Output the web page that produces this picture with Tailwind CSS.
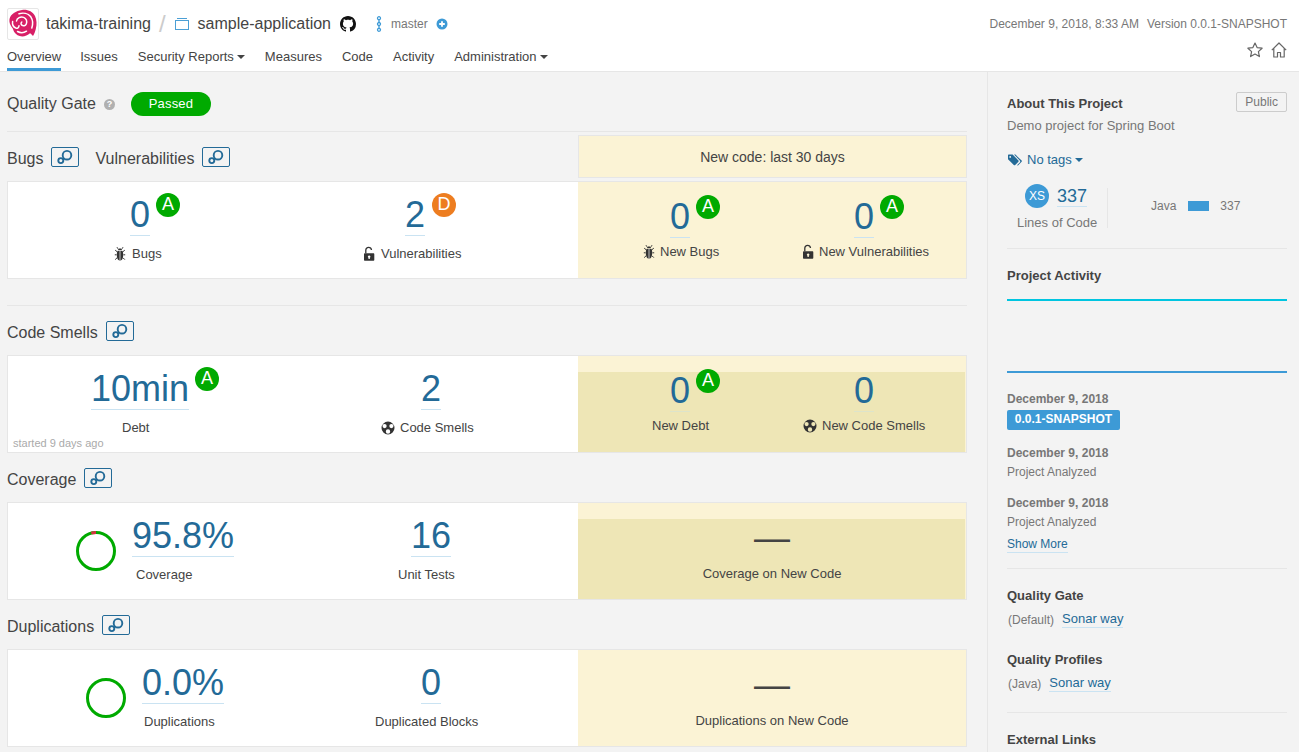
<!DOCTYPE html>
<html lang="en">
<head>
  <meta charset="UTF-8">
  <title>sample-application</title>
  <script src="https://cdn.jsdelivr.net/npm/@tailwindcss/browser@4"></script>
</head>
<body class="h-screen overflow-hidden bg-[#f3f3f3] text-[13px] leading-[18px] text-[#444] font-['Liberation_Sans',sans-serif]">
  <!-- shared icons -->
  <svg class="hidden">
    <symbol id="i-link" viewBox="0 0 28 20">
      <g fill="none" stroke="currentColor" stroke-width="1.900">
        <circle cx="16" cy="8.200" r="4.300"/>
        <circle cx="9.800" cy="13.600" r="2.500"/>
        <path d="M12.800 11.200l-1.300 1.100"/>
      </g>
    </symbol>
    <symbol id="i-bug" viewBox="0 0 14 16">
      <path fill="currentColor" d="M4.800 4.200C5 3 5.900 2.400 7 2.400s2 .6 2.200 1.800zM4.400 5h5.200c.5 1 .6 2.400.6 4 0 3-1.100 5.500-2.700 5.600H6.500C4.900 14.500 3.800 12 3.800 9c0-1.600.1-3 .6-4z"/>
      <path fill="none" stroke="currentColor" stroke-width="1" d="M5 2.800L4 1.200M9 2.800l1-1.600M4 5.600L2.200 4.200M10 5.600l1.800-1.400M3.600 8.800H1.800M10.400 8.800h1.800M4 11.800l-1.800 1.800M10 11.800l1.800 1.800"/>
      <path fill="none" stroke="#fff" stroke-width=".7" d="M7 5v9.500"/>
    </symbol>
    <symbol id="i-lock" viewBox="0 0 14 16">
      <path fill="currentColor" fill-rule="evenodd" d="M3 7.200h8.300c.6 0 1 .4 1 1v5.600c0 .6-.4 1-1 1H3c-.6 0-1-.4-1-1V8.200c0-.6.4-1 1-1zm4.200 2.200a1.300 1.300 0 0 0-.7 2.400v1.300h1.300v-1.300a1.300 1.300 0 0 0-.6-2.400z"/>
      <path fill="none" stroke="currentColor" stroke-width="1.300" d="M3.800 7.200V4.200C3.800 2.700 4.900 1.400 6.600 1.400S9.300 2.600 9.500 4"/>
    </symbol>
    <symbol id="i-smell" viewBox="0 0 14 14">
      <path fill="currentColor" fill-rule="evenodd" d="M7 .5a6.500 6.500 0 1 0 0 13a6.500 6.500 0 0 0 0-13zM7 8.300a2.200 2.200 0 1 1 0 4.400a2.200 2.200 0 0 1 0-4.400zM3.600 3a2.100 2.100 0 1 1 0 4.200a2.100 2.100 0 0 1 0-4.200zM10.400 3a2.100 2.100 0 1 1 0 4.200a2.100 2.100 0 0 1 0-4.200z"/>
    </symbol>
  </svg>

  <!-- header -->
  <header class="h-[72px] bg-white border-b border-[#e6e6e6]">
    <div class="h-[48px] flex items-center pl-[7px] pr-[12px]">
      <div class="w-[32px] h-[32px] border border-[#e6e6e6] rounded-[2px] flex items-center justify-center">
        <svg class="w-[30px] h-[30px]" viewBox="0 0 30 30">
          <path fill="#d81f66" d="M14 1c5.500-.8 10.500 1.500 13 6 1.800 3.500 2 8.500.8 13-.5 2.500-1.600 5-2.800 7-1-1-1.800-2.200-3-2.800-2 2-5 3.200-7.800 3.200-3.400 0-6.200-1.800-8-4.400-1-1.600-.8-3.500-2.600-5C2 15.500 1 13 1.500 10 2.500 5 8 1.800 14 1z"/>
          <g fill="none" stroke="#fff" stroke-width="1.500" stroke-linecap="round">
            <path d="M11 4.800c4-1.300 9-.5 11.800 3 2 3 2.200 7.500 1 11.200"/>
            <path d="M8.500 12c.5-3 4-4.600 7.200-3.600 2.600 1 3.700 4 2.600 6.600-.8 1.900-3 2.400-4.500 1.200-1-.8-1-2.400 0-3.200"/>
            <path d="M4.600 12.500c-.5 3 1 5.600 3.200 6.500 1.600.6 3.200-.5 3.200-2.200"/>
            <path d="M9.500 22.500c2.700 1.500 6.300 1.500 9-.3"/>
          </g>
        </svg>
      </div>
      <span class="ml-[7px] text-[16px]">takima-training</span>
      <span class="ml-[8px] text-[24px] font-light text-[#ccc]">/</span>
      <svg class="ml-[9px] w-[14px] h-[14px] -mt-[1px]" viewBox="0 0 14 14" fill="none" stroke="#4b9fd5" stroke-width="1">
        <rect x=".5" y="3.500" width="13" height="9"/>
        <path d="M2 1.500h10"/>
      </svg>
      <span class="ml-[9px] text-[16px]">sample-application</span>
      <svg class="ml-[9px] w-[16px] h-[16px]" viewBox="0 0 16 16">
        <path fill="#111" d="M8 0C3.580 0 0 3.580 0 8c0 3.540 2.290 6.530 5.470 7.590.4.070.55-.17.55-.38 0-.19-.01-.82-.01-1.490-2.010.37-2.530-.49-2.690-.94-.09-.23-.48-.94-.82-1.130-.28-.15-.68-.52-.01-.53.63-.01 1.080.58 1.230.82.72 1.210 1.870.87 2.330.66.07-.52.28-.87.51-1.070-1.780-.2-3.640-.89-3.640-3.950 0-.87.31-1.590.82-2.150-.08-.2-.36-1.020.08-2.120 0 0 .67-.21 2.200.82.64-.18 1.320-.27 2-.27.68 0 1.360.09 2 .27 1.530-1.040 2.200-.82 2.200-.82.44 1.100.16 1.920.08 2.120.51.56.82 1.270.82 2.150 0 3.070-1.870 3.750-3.650 3.950.29.25.54.73.54 1.480 0 1.070-.01 1.930-.01 2.200 0 .21.15.46.55.38A8.013 8.013 0 0 0 16 8c0-4.420-3.580-8-8-8z"/>
      </svg>
      <svg class="ml-[20px] w-[6px] h-[16px]" viewBox="0 0 6 16" fill="none" stroke="#3d9ad6" stroke-width="1.300">
        <circle cx="3" cy="2.200" r="1.500"/><circle cx="3" cy="8" r="1.500"/><circle cx="3" cy="13.800" r="1.500"/>
        <path d="M3 3.700v2.800M3 9.500v2.800"/>
      </svg>
      <span class="ml-[9px] text-[12px] text-[#777]">master</span>
      <svg class="ml-[8px] w-[12px] h-[12px]" viewBox="0 0 12 12">
        <circle cx="6" cy="6" r="5.500" fill="#3d9ad6"/>
        <path d="M3.200 6h5.600M6 3.200v5.600" stroke="#fff" stroke-width="1.800"/>
      </svg>
      <span class="ml-auto text-[12px] text-[#777]">December 9, 2018, 8:33 AM</span>
      <span class="ml-[8px] text-[12px] text-[#777]">Version 0.0.1-SNAPSHOT</span>
    </div>
    <div class="flex pl-[7px] pr-[12px]">
      <nav class="flex items-start gap-[20px]">
        <a class="-mr-px pb-[2px] border-b-[3px] border-[#3d9ad6]">Overview</a>
        <a>Issues</a>
        <a class="flex items-center gap-[3px]">Security Reports
          <svg class="w-[8px] h-[4px]" viewBox="0 0 8 4"><path fill="#444" d="M0 0h8L4 4z"/></svg>
        </a>
        <a>Measures</a>
        <a>Code</a>
        <a>Activity</a>
        <a class="flex items-center gap-[3px]">Administration
          <svg class="w-[8px] h-[4px]" viewBox="0 0 8 4"><path fill="#444" d="M0 0h8L4 4z"/></svg>
        </a>
      </nav>
      <div class="ml-auto flex gap-[8px] -mt-[6px] h-[16px]">
        <svg class="w-[16px] h-[16px]" viewBox="0 0 16 16" fill="none" stroke="#666" stroke-width="1.200" stroke-linejoin="round">
          <path d="M8 1l2.100 4.600 5 .6-3.700 3.400 1 5L8 12.100 3.600 14.600l1-5L.9 6.200l5-.6z"/>
        </svg>
        <svg class="w-[16px] h-[16px]" viewBox="0 0 16 16" fill="none" stroke="#666" stroke-width="1.200" stroke-linejoin="round">
          <path d="M.8 8.200L8 1l7.200 7.200M2.800 6.500v8.500h3.700v-4.500h3v4.500h3.700V6.500"/>
        </svg>
      </div>
    </div>
  </header>

  <div class="flex h-[680px]">
    <!-- main column -->
    <main class="w-[987px] shrink-0 pl-[7px] pr-[20px]">
      <div class="pt-[20px] flex items-center h-[44px]">
        <span class="text-[16px]">Quality Gate</span>
        <span class="ml-[8px] w-[11px] h-[11px] rounded-full bg-[#b0b0b0] text-white text-[9px] leading-[11px] font-bold text-center">?</span>
        <span class="ml-[16px] w-[80px] h-[24px] rounded-[12px] bg-[#00aa00] text-white text-[13px] leading-[24px] text-center tracking-[0.2px]">Passed</span>
      </div>
      <div class="mt-[15px] h-px bg-[#e6e6e6]"></div>

      <!-- bugs and vulnerabilities -->
      <div class="mt-[3px] flex h-[43px]">
        <div class="w-[571px] flex items-start pt-[12px]">
          <span class="text-[16px] leading-[24px]">Bugs</span>
          <a class="ml-[8px] w-[28px] h-[20px] border border-[#236a97] rounded-[2px] text-[#236a97]"><svg class="-m-px w-[28px] h-[20px]"><use href="#i-link"/></svg></a>
          <span class="ml-[16px] text-[16px] leading-[24px]">Vulnerabilities</span>
          <a class="ml-[8px] w-[28px] h-[20px] border border-[#236a97] rounded-[2px] text-[#236a97]"><svg class="-m-px w-[28px] h-[20px]"><use href="#i-link"/></svg></a>
        </div>
        <div class="flex-1 bg-[#fbf3d5] border border-[#e6e6e6] text-[14px] leading-[43px] text-center">New code: last 30 days</div>
      </div>
      <div class="mt-[3px] h-[98px] border border-[#e6e6e6] bg-white flex">
        <div class="w-[570px] grid grid-cols-[275px_1fr] pt-[13px]">
          <div>
            <div class="flex items-start pl-[122px]">
              <span class="text-[36px] leading-[40px] text-[#236a97] border-b border-[#cae3f2]">0</span>
              <span class="ml-[6px] -mt-[2px] w-[24px] h-[24px] rounded-full bg-[#00aa00] text-white text-[18px] leading-[22px] text-center">A</span>
            </div>
            <div class="mt-[9px] pl-[105px] flex items-center gap-[5px]"><svg class="w-[14px] h-[16px] text-[#333]"><use href="#i-bug"/></svg>Bugs</div>
          </div>
          <div>
            <div class="flex items-start pl-[122px]">
              <span class="text-[36px] leading-[40px] text-[#236a97] border-b border-[#cae3f2]">2</span>
              <span class="ml-[7px] -mt-[2px] w-[24px] h-[24px] rounded-full bg-[#ed7d20] text-white text-[18px] leading-[22px] text-center">D</span>
            </div>
            <div class="mt-[9px] pl-[79px] flex items-center gap-[5px]"><svg class="w-[14px] h-[16px] text-[#333]"><use href="#i-lock"/></svg>Vulnerabilities</div>
          </div>
        </div>
        <div class="flex-1 bg-[#fbf3d5] grid grid-cols-[184px_1fr] pt-[15px]">
          <div>
            <div class="flex items-start pl-[92px]">
              <span class="text-[36px] leading-[40px] text-[#236a97] border-b border-[#cae3f2]">0</span>
              <span class="ml-[6px] -mt-[2px] w-[24px] h-[24px] rounded-full bg-[#00aa00] text-white text-[18px] leading-[22px] text-center">A</span>
            </div>
            <div class="mt-[5px] pl-[64px] flex items-center gap-[4px]"><svg class="w-[14px] h-[16px] text-[#333]"><use href="#i-bug"/></svg>New Bugs</div>
          </div>
          <div>
            <div class="flex items-start pl-[92px]">
              <span class="text-[36px] leading-[40px] text-[#236a97] border-b border-[#cae3f2]">0</span>
              <span class="ml-[6px] -mt-[2px] w-[24px] h-[24px] rounded-full bg-[#00aa00] text-white text-[18px] leading-[22px] text-center">A</span>
            </div>
            <div class="mt-[5px] pl-[39px] flex items-center gap-[4px]"><svg class="w-[14px] h-[16px] text-[#333]"><use href="#i-lock"/></svg>New Vulnerabilities</div>
          </div>
        </div>
      </div>

      <div class="mt-[26px] h-px bg-[#e6e6e6]"></div>

      <!-- code smells -->
      <div class="mt-[15px] flex items-start h-[20px]">
        <span class="text-[16px] leading-[24px]">Code Smells</span>
        <a class="ml-[8px] w-[28px] h-[20px] border border-[#236a97] rounded-[2px] text-[#236a97]"><svg class="-m-px w-[28px] h-[20px]"><use href="#i-link"/></svg></a>
      </div>
      <div class="mt-[14px] h-[98px] border border-[#e6e6e6] bg-white flex">
        <div class="relative w-[570px] grid grid-cols-[275px_1fr] pt-[13px]">
          <div>
            <div class="flex items-start pl-[83px]">
              <span class="text-[36px] leading-[40px] text-[#236a97] border-b border-[#cae3f2]">10min</span>
              <span class="ml-[6px] -mt-[2px] w-[24px] h-[24px] rounded-full bg-[#00aa00] text-white text-[18px] leading-[22px] text-center">A</span>
            </div>
            <div class="mt-[9px] pl-[114px]">Debt</div>
          </div>
          <div>
            <div class="flex items-start pl-[138px]">
              <span class="text-[36px] leading-[40px] text-[#236a97] border-b border-[#cae3f2]">2</span>
            </div>
            <div class="mt-[9px] pl-[98px] flex items-center gap-[5px]"><svg class="w-[14px] h-[14px] text-[#333]"><use href="#i-smell"/></svg>Code Smells</div>
          </div>
          <span class="absolute left-[5px] bottom-[1px] text-[11px] leading-[16px] text-[#aaa]">started 9 days ago</span>
        </div>
        <div class="relative flex-1 bg-[#fbf3d5] grid grid-cols-[184px_1fr] pt-[15px]">
          <div class="absolute left-0 right-[1px] top-[16px] bottom-0 bg-[#eee6b6]"></div>
          <div class="relative">
            <div class="flex items-start pl-[92px]">
              <span class="text-[36px] leading-[40px] text-[#236a97] border-b border-[#dde4cb]">0</span>
              <span class="ml-[6px] -mt-[2px] w-[24px] h-[24px] rounded-full bg-[#00aa00] text-white text-[18px] leading-[22px] text-center">A</span>
            </div>
            <div class="mt-[5px] pl-[74px]">New Debt</div>
          </div>
          <div class="relative">
            <div class="flex items-start pl-[92px]">
              <span class="text-[36px] leading-[40px] text-[#236a97] border-b border-[#dde4cb]">0</span>
            </div>
            <div class="mt-[5px] pl-[41px] flex items-center gap-[5px]"><svg class="w-[14px] h-[14px] text-[#333]"><use href="#i-smell"/></svg>New Code Smells</div>
          </div>
        </div>
      </div>

      <!-- coverage -->
      <div class="mt-[15px] flex items-start h-[20px]">
        <span class="text-[16px] leading-[24px]">Coverage</span>
        <a class="ml-[8px] w-[28px] h-[20px] border border-[#236a97] rounded-[2px] text-[#236a97]"><svg class="-m-px w-[28px] h-[20px]"><use href="#i-link"/></svg></a>
      </div>
      <div class="mt-[14px] h-[98px] border border-[#e6e6e6] bg-white flex">
        <div class="w-[570px] grid grid-cols-[275px_1fr] pt-[13px]">
          <div class="flex items-start pl-[68px]">
            <svg class="mt-[15px] w-[40px] h-[40px] shrink-0" viewBox="0 0 40 40" fill="none" stroke-width="3">
              <circle cx="20" cy="20" r="18.500" stroke="#00aa00"/>
              <path d="M15.300 2.100A18.500 18.500 0 0 1 20 1.500" stroke="#d4333f"/>
            </svg>
            <div class="ml-[16px]">
              <div class="text-[36px] leading-[40px] text-[#236a97] border-b border-[#cae3f2]">95.8%</div>
              <div class="mt-[9px] pl-[4px]">Coverage</div>
            </div>
          </div>
          <div>
            <div class="flex items-start pl-[128px]">
              <span class="text-[36px] leading-[40px] text-[#236a97] border-b border-[#cae3f2]">16</span>
            </div>
            <div class="mt-[9px] pl-[115px]">Unit Tests</div>
          </div>
        </div>
        <div class="relative flex-1 bg-[#fbf3d5] flex flex-col items-center pt-[15px]">
          <div class="absolute left-0 right-[1px] top-[16px] bottom-0 bg-[#eee6b6]"></div>
          <span class="relative text-[36px] leading-[40px]">—</span>
          <span class="relative mt-[7px]">Coverage on New Code</span>
        </div>
      </div>

      <!-- duplications -->
      <div class="mt-[15px] flex items-start h-[20px]">
        <span class="text-[16px] leading-[24px]">Duplications</span>
        <a class="ml-[8px] w-[28px] h-[20px] border border-[#236a97] rounded-[2px] text-[#236a97]"><svg class="-m-px w-[28px] h-[20px]"><use href="#i-link"/></svg></a>
      </div>
      <div class="mt-[14px] h-[98px] border border-[#e6e6e6] bg-white flex">
        <div class="w-[570px] grid grid-cols-[275px_1fr] pt-[13px]">
          <div class="flex items-start pl-[78px]">
            <svg class="mt-[15px] w-[40px] h-[40px] shrink-0" viewBox="0 0 40 40" fill="none" stroke-width="3">
              <circle cx="20" cy="20" r="18.500" stroke="#00aa00"/>
            </svg>
            <div class="ml-[16px]">
              <div class="text-[36px] leading-[40px] text-[#236a97] border-b border-[#cae3f2]">0.0%</div>
              <div class="mt-[9px] pl-[2px]">Duplications</div>
            </div>
          </div>
          <div>
            <div class="flex items-start pl-[138px]">
              <span class="text-[36px] leading-[40px] text-[#236a97] border-b border-[#cae3f2]">0</span>
            </div>
            <div class="mt-[9px] pl-[92px]">Duplicated Blocks</div>
          </div>
        </div>
        <div class="flex-1 bg-[#fbf3d5] flex flex-col items-center pt-[15px]">
          <span class="text-[36px] leading-[40px]">—</span>
          <span class="mt-[7px]">Duplications on New Code</span>
        </div>
      </div>
    </main>

    <!-- sidebar -->
    <aside class="flex-1 border-l border-[#e6e6e6] pl-[19px] pr-[12px] pt-[20px]">
      <div class="flex justify-between items-start">
        <span class="font-bold mt-[3px]">About This Project</span>
        <span class="h-[20px] px-[8px] border border-[#ccc] rounded-[2px] text-[12px] leading-[18px] text-[#777]">Public</span>
      </div>
      <p class="mt-[4px] text-[#777]">Demo project for Spring Boot</p>
      <div class="mt-[16px] flex items-center text-[#236a97]">
        <svg class="ml-px w-[14px] h-[12px]" viewBox="0 0 14 12" fill="currentColor">
          <path d="M0 1v4.200l5.800 5.800a1 1 0 0 0 1.400 0l3.200-3.200a1 1 0 0 0 0-1.400L4.600.6H.5zM2.200 2a.9.9 0 1 1 0 1.800a.9.9 0 0 1 0-1.800z" fill-rule="evenodd"/>
          <path d="M6 .6l5.800 5.800a1.500 1.500 0 0 1 0 2L9 11.200l1 .2 3.600-3.600a1 1 0 0 0 0-1.400L7.400.6z"/>
        </svg>
        <span class="ml-[5px]">No tags</span>
        <svg class="ml-[3px] w-[8px] h-[4px]" viewBox="0 0 8 4"><path fill="#236a97" d="M0 0h8L4 4z"/></svg>
      </div>
      <div class="mt-[15px] flex">
        <div class="w-[100px]">
          <div class="flex items-start pl-[18px]">
            <span class="w-[24px] h-[24px] rounded-full bg-[#3d9ad6] text-white text-[12px] leading-[24px] text-center">XS</span>
            <span class="ml-[8px] h-[23px] text-[18px] leading-[24px] text-[#236a97] border-b border-[#cae3f2]">337</span>
          </div>
          <div class="mt-[6px] pl-[10px] text-[#777]">Lines of Code</div>
        </div>
        <div class="w-px h-[40px] mt-[4px] bg-[#e6e6e6]"></div>
        <div class="ml-[43px] mt-[13px] h-[18px] flex items-center text-[12px] text-[#777]">
          <span>Java</span>
          <span class="ml-[12px] w-[21px] h-[10px] bg-[#3d9ad6]"></span>
          <span class="ml-[11px]">337</span>
        </div>
      </div>
      <div class="mt-[16px] h-px bg-[#e6e6e6]"></div>
      <h3 class="mt-[18px] font-bold">Project Activity</h3>
      <div class="mt-[14px] h-[2px] bg-[#00c5e0]"></div>
      <div class="mt-[70px] h-[2px] bg-[#3d9ad6]"></div>
      <div class="mt-[17px] text-[12px] font-bold text-[#777]">December 9, 2018</div>
      <div class="mt-[2px] w-[113px] h-[20px] rounded-[2px] bg-[#3d9ad6] text-white text-[12px] leading-[18px] font-bold text-center">0.0.1-SNAPSHOT</div>
      <div class="mt-[14px] text-[12px] font-bold text-[#777]">December 9, 2018</div>
      <div class="mt-px text-[12px] text-[#777]">Project Analyzed</div>
      <div class="mt-[13px] text-[12px] font-bold text-[#777]">December 9, 2018</div>
      <div class="mt-px text-[12px] text-[#777]">Project Analyzed</div>
      <a class="block w-fit mt-[5px] text-[12px] leading-[16px] text-[#236a97] border-b border-[#cae3f2]">Show More</a>
      <div class="mt-[15px] h-px bg-[#e6e6e6]"></div>
      <h3 class="mt-[18px] font-bold">Quality Gate</h3>
      <div class="mt-[6px] flex items-start pl-px">
        <span class="text-[12px] text-[#777]">(Default)</span>
        <a class="ml-[8px] leading-[16px] text-[#236a97] border-b border-[#cae3f2]">Sonar way</a>
      </div>
      <h3 class="mt-[22px] font-bold">Quality Profiles</h3>
      <div class="mt-[6px] flex items-start pl-px">
        <span class="text-[12px] text-[#777]">(Java)</span>
        <a class="ml-[8px] leading-[16px] text-[#236a97] border-b border-[#cae3f2]">Sonar way</a>
      </div>
      <div class="mt-[19px] h-px bg-[#e6e6e6]"></div>
      <h3 class="mt-[18px] font-bold">External Links</h3>
    </aside>
  </div>
</body>
</html>
